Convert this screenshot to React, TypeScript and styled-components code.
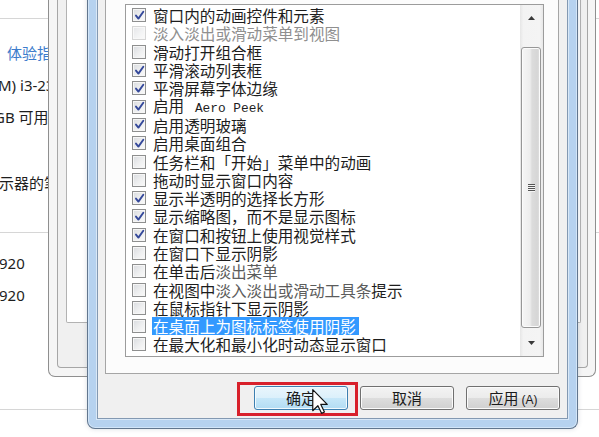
import React from "react";
import styled, { createGlobalStyle, css } from "styled-components";

const GlobalStyle = createGlobalStyle`
  html, body { margin: 0; padding: 0; background: #fff; }
  body {
    width: 599px; height: 437px; overflow: hidden;
    font-family: "Noto Sans CJK SC", "Noto Sans", sans-serif;
  }
  #root { width: 599px; height: 437px; }
`;

const Screen = styled.div`
  position: relative;
  width: 599px;
  height: 437px;
  overflow: hidden;
  background: #fff;
`;

/* ---------- background page (system info) ---------- */
const Page = styled.div`
  display: flex;
  flex-direction: column;
  padding-top: 18px;
`;

const Divider = styled.div<{ $gap: number }>`
  height: 1px;
  background: #d6d6d6;
  margin-top: ${(p) => p.$gap}px;
`;

const PageLine = styled.div<{ $gap: number; $shift: number; $link?: boolean }>`
  margin-top: ${(p) => p.$gap}px;
  margin-left: ${(p) => p.$shift}px;
  height: 20px;
  line-height: 20px;
  white-space: nowrap;
  font-size: 15px;
  font-family: "Noto Sans", "Noto Sans CJK SC", sans-serif;
  color: ${(p) => (p.$link ? "#3d7ccc" : "#1e1e1e")};
`;

/* ---------- back window ---------- */
const BackWindow = styled.div`
  position: absolute;
  left: 48px;
  top: -40px;
  width: 548px;
  height: 417px;
  box-sizing: border-box;
  border: 1px solid #8f8f8f;
  border-top: none;
  border-radius: 0 0 7px 7px;
  background: #f5f5f5;
  padding: 0 7px 8px 8px;
  display: flex;
`;

const BackClient = styled.div`
  flex: 1;
  display: flex;
  flex-direction: column;
  border: 1px solid #a6a6a6;
  border-top: none;
  border-radius: 0 0 4px 4px;
  background: #f0f0f0;
  padding: 0 6px 0 8px;
`;

const BackPanel = styled.div`
  height: 363px;
  box-sizing: border-box;
  border: 1px solid #b2b2b2;
  border-top: none;
  border-radius: 0 0 2px 2px;
  background: #fff;
`;

/* ---------- front dialog ---------- */
const FrontWindow = styled.div`
  position: absolute;
  left: 87px;
  top: -40px;
  width: 491px;
  box-sizing: border-box;
  border: 1px solid #61768e;
  border-top: none;
  border-radius: 0 0 8px 8px;
  background: #b6d2ef;
  padding: 0 9px 9px 9px;
  box-shadow: inset 0 0 0 1px #d2e5f8, 0 0 5px rgba(40, 60, 90, 0.18);
`;

const Client = styled.div`
  display: flex;
  flex-direction: column;
  border: 1px solid #8399b2;
  border-top: none;
  background: #f0f0f0;
  padding: 0 7px 8px 7px;
  box-shadow: 0 0 0 1px #d9e8f7;
`;

const TabPanel = styled.div`
  border: 1px solid #a5a5a5;
  border-top: none;
  background: #fcfcfc;
  padding: 44px 14px 16px 19px;
  margin-right: 1px;
`;

const ListBox = styled.div`
  height: 353px;
  box-sizing: border-box;
  border: 1px solid #9c9c9c;
  background: #fff;
  display: flex;
`;

const Items = styled.div`
  flex: 1;
  min-width: 0;
  overflow: hidden;
  padding-top: 1px;
`;

const Row = styled.div`
  height: 18.3px;
  display: flex;
  align-items: center;
  gap: 7px;
  padding-left: 6px;
  white-space: nowrap;
`;

const Box = styled.span<{ $faint?: boolean }>`
  flex: none;
  width: 14px;
  height: 14px;
  box-sizing: border-box;
  border: 1px solid ${(p) => (p.$faint ? "#c6c6c6" : "#8e8f8f")};
  background: linear-gradient(135deg, #d9dbdf 0%, #eeeff0 55%, #fafafa 100%);
  box-shadow: inset 0 0 0 1px #f6f6f6;
  display: flex;
  align-items: center;
  justify-content: center;
  ${(p) => p.$faint && css`opacity: 0.7;`}
`;

const Label = styled.span<{ $faint?: boolean; $selected?: boolean }>`
  font-size: 15.6px;
  line-height: 18px;
  color: ${(p) => (p.$faint ? "#8f8f8f" : "#1d1d1d")};
  ${(p) =>
    p.$selected &&
    css`
      background: #3399ff;
      color: #fff;
      margin-left: -1px;
      padding: 0 3px 0 1px;
    `}
`;

const Dim = styled.span`
  color: #5c5c5c;
`;

const Mono = styled.span`
  font-family: "Liberation Mono", monospace;
  font-size: 12.8px;
  margin-left: 3px;
`;

/* scrollbar */
const ScrollBar = styled.div`
  width: 23px;
  display: flex;
  flex-direction: column;
  background: linear-gradient(90deg, #e6e6e6 0%, #f3f3f3 15%, #f4f4f4 85%, #e8e8e8 100%);
`;

const ScrollButton = styled.div`
  height: 26px;
  display: flex;
  align-items: center;
  justify-content: center;
  flex: none;
`;

const Track = styled.div`
  flex: 1;
  display: flex;
  flex-direction: column;
  padding-top: 16px;
`;

const Thumb = styled.div`
  height: 281px;
  margin: 0 2px 0 1px;
  box-sizing: border-box;
  border: 1px solid #979797;
  border-radius: 3px;
  background: linear-gradient(90deg, #f6f6f6 0%, #ededed 45%, #dcdcdc 55%, #d6d6d6 85%, #e2e2e2 100%);
  box-shadow: inset 0 0 0 1px #fbfbfb;
  display: flex;
  align-items: center;
  justify-content: center;
`;

const Grip = styled.div`
  display: flex;
  flex-direction: column;
  gap: 1px;
`;

const GripLine = styled.div`
  width: 7px;
  height: 1px;
  background: #555;
  box-shadow: 0 1px 0 #f4f4f4;
`;

/* buttons */
const ButtonRow = styled.div`
  margin-top: 12px;
  display: flex;
  justify-content: flex-end;
  gap: 12px;
`;

const ButtonSlot = styled.div`
  position: relative;
`;

const Button = styled.button<{ $hot?: boolean }>`
  display: block;
  width: 94px;
  height: 24px;
  box-sizing: border-box;
  padding: 0;
  border: 1px solid #707070;
  border-radius: 3px;
  background: linear-gradient(#f3f3f3 0%, #ebebeb 50%, #dddddd 51%, #d0d0d0 100%);
  box-shadow: inset 0 0 0 1px #fbfbfb;
  font-family: "Noto Sans CJK SC", sans-serif;
  font-size: 15px;
  line-height: 22px;
  color: #1b1b1b;
  ${(p) =>
    p.$hot &&
    css`
      border-color: #3c7fb1;
      background: linear-gradient(#e9f5fc 0%, #dbf0fb 50%, #c6e7f9 51%, #b2dcf3 100%);
      box-shadow: inset 0 0 0 1px #f2fafe;
    `}
`;

const Accel = styled.span`
  font-family: "Liberation Sans", sans-serif;
  font-size: 12px;
  margin-left: 3px;
`;

const RedMark = styled.div`
  position: absolute;
  left: -17px;
  top: -4px;
  right: -10px;
  bottom: -6px;
  border: 3px solid #d8202b;
  pointer-events: none;
`;

const Pointer = styled.svg`
  position: absolute;
  left: 58px;
  top: 3px;
`;

type Seg = { t: string; dim?: boolean; mono?: boolean };
type Item = { checked: boolean; segs: Seg[]; faint?: boolean; selected?: boolean };

const items: Item[] = [
  { checked: true, segs: [{ t: "窗口内的动画控件和元素" }] },
  { checked: false, faint: true, segs: [{ t: "淡入淡出或滑动菜单到视图" }] },
  { checked: false, segs: [{ t: "滑动打开组合框" }] },
  { checked: true, segs: [{ t: "平滑滚动列表框" }] },
  { checked: true, segs: [{ t: "平滑屏幕字体边缘" }] },
  { checked: true, segs: [{ t: "启用" }, { t: " Aero Peek", mono: true }] },
  { checked: true, segs: [{ t: "启用透明玻璃" }] },
  { checked: true, segs: [{ t: "启用桌面组合" }] },
  { checked: false, segs: [{ t: "任务栏和「开始」菜单中的动画" }] },
  { checked: false, segs: [{ t: "拖动时显示窗口内容" }] },
  { checked: true, segs: [{ t: "显示半透明的选择长方形" }] },
  { checked: true, segs: [{ t: "显示缩略图，而不是显示图标" }] },
  { checked: true, segs: [{ t: "在窗口和按钮上使用视觉样式" }] },
  { checked: false, segs: [{ t: "在窗口下显示阴影" }] },
  { checked: false, segs: [{ t: "在单击后" }, { t: "淡出菜单", dim: true }] },
  { checked: false, segs: [{ t: "在视图中" }, { t: "淡入淡出或滑动工具条", dim: true }, { t: "提示" }] },
  { checked: false, segs: [{ t: "在鼠标指针下显示阴影" }] },
  { checked: false, selected: true, segs: [{ t: "在桌面上为图标标签使用阴影" }] },
  { checked: false, segs: [{ t: "在最大化和最小化时动态显示窗口" }] },
];

const Check = () => (
  <svg width="11" height="11" viewBox="0 0 11 11">
    <path d="M2 5.6 L4.4 8.6 L9.3 1.8" fill="none" stroke="#34489a" strokeWidth="1.9" strokeLinecap="round" strokeLinejoin="round" />
  </svg>
);

const Arrow = ({ down }: { down?: boolean }) => (
  <svg width="7" height="4" viewBox="0 0 7 4">
    <path d={down ? "M0 0 H7 L3.5 4 Z" : "M0 4 H7 L3.5 0 Z"} fill="#3a3a3a" />
  </svg>
);

export default function App() {
  return (
    <Screen>
      <GlobalStyle />
      <Page>
        <Divider $gap={0} />
        <PageLine $gap={24} $shift={7} $link>
          体验指数
        </PageLine>
        <PageLine $gap={12} $shift={-2}>
          M) i3-2350M CPU
        </PageLine>
        <PageLine $gap={12} $shift={-6}>
          GB 可用
        </PageLine>
        <PageLine $gap={46} $shift={-16}>
          显示器的笔或触控输入
        </PageLine>
        <Divider $gap={39} />
        <PageLine $gap={20} $shift={-1}>
          920
        </PageLine>
        <PageLine $gap={12} $shift={-1}>
          920
        </PageLine>
        <Divider $gap={104} />
      </Page>

      <BackWindow>
        <BackClient>
          <BackPanel />
        </BackClient>
      </BackWindow>

      <FrontWindow>
        <Client>
          <TabPanel>
            <ListBox>
              <Items>
                {items.map((it, i) => (
                  <Row key={i}>
                    <Box $faint={it.faint}>{it.checked && <Check />}</Box>
                    <Label $faint={it.faint} $selected={it.selected}>
                      {it.segs.map((s, j) =>
                        s.mono ? (
                          <Mono key={j}>{s.t}</Mono>
                        ) : s.dim ? (
                          <Dim key={j}>{s.t}</Dim>
                        ) : (
                          <React.Fragment key={j}>{s.t}</React.Fragment>
                        )
                      )}
                    </Label>
                  </Row>
                ))}
              </Items>
              <ScrollBar>
                <ScrollButton>
                  <Arrow />
                </ScrollButton>
                <Track>
                  <Thumb>
                    <Grip>
                      <GripLine />
                      <GripLine />
                      <GripLine />
                      <GripLine />
                    </Grip>
                  </Thumb>
                </Track>
                <ScrollButton>
                  <Arrow down />
                </ScrollButton>
              </ScrollBar>
            </ListBox>
          </TabPanel>
          <ButtonRow>
            <ButtonSlot>
              <Button $hot>确定</Button>
              <RedMark />
              <Pointer width="16" height="25" viewBox="0 0 12 19">
                <path
                  d="M0.5 0.5 L0.5 16.5 L4.4 12.7 L7.2 18.5 L9.4 17.5 L6.6 11.7 L11.5 11.7 Z"
                  fill="#fff"
                  stroke="#111"
                  strokeWidth="0.9"
                  strokeLinejoin="round"
                />
              </Pointer>
            </ButtonSlot>
            <ButtonSlot>
              <Button>取消</Button>
            </ButtonSlot>
            <ButtonSlot>
              <Button>
                应用<Accel>(A)</Accel>
              </Button>
            </ButtonSlot>
          </ButtonRow>
        </Client>
      </FrontWindow>
    </Screen>
  );
}
